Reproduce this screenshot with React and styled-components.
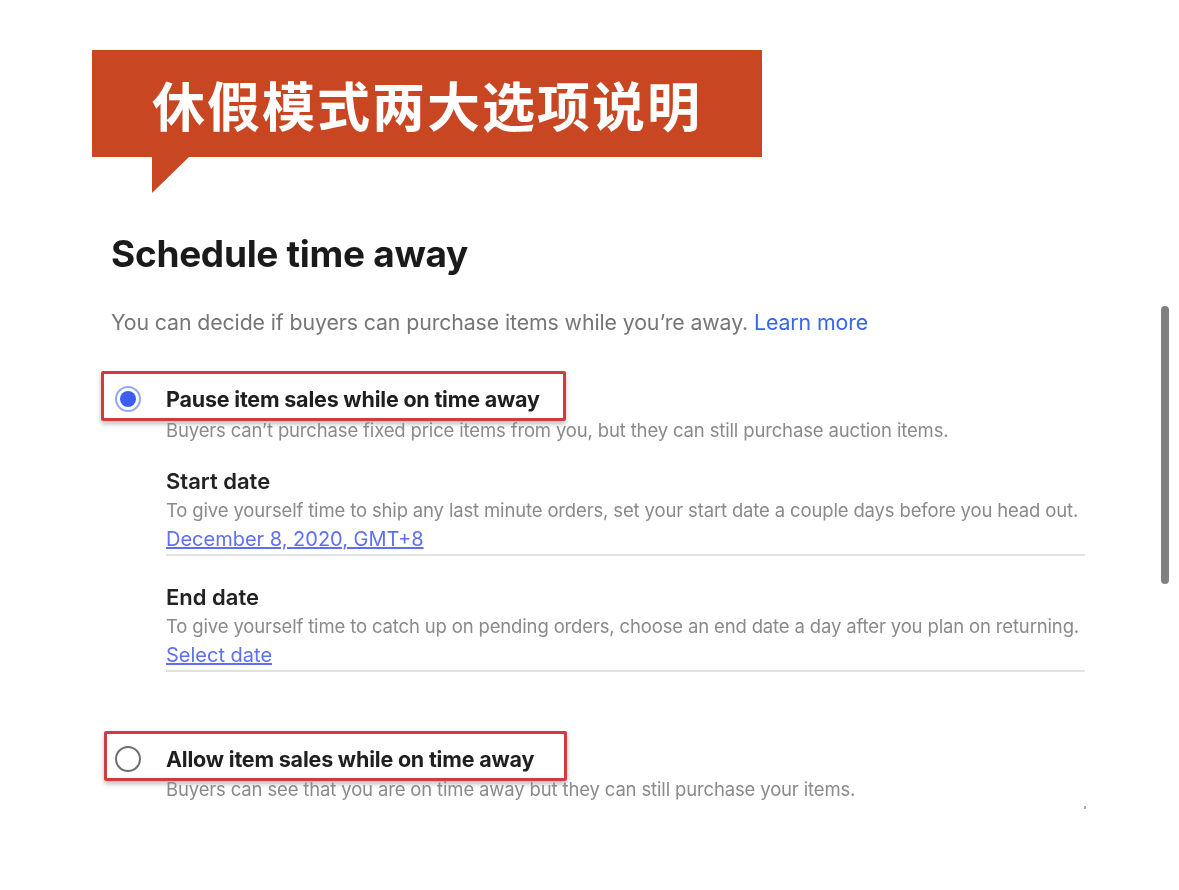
import React from 'react';
import styled, { createGlobalStyle } from 'styled-components';

const GlobalStyle = createGlobalStyle`
  html, body {
    margin: 0;
    padding: 0;
    background: #fff;
  }
  body {
    font-family: Inter, "Noto Sans", "Liberation Sans", sans-serif;
    overflow: hidden;
  }
`;

const Page = styled.div`
  position: relative;
  width: 1179px;
  height: 890px;
  padding-top: 50px;
  box-sizing: border-box;
`;

const Banner = styled.div`
  position: relative;
  margin-left: 92px;
  width: 670px;
  height: 107px;
  background: #c84622;
  display: flex;
  align-items: center;
  padding-left: 60px;
  box-sizing: border-box;
  color: #fff;
  font-family: "Noto Sans CJK SC", sans-serif;
  font-weight: 700;
  font-size: 53px;
  letter-spacing: 2px;

  &::after {
    content: '';
    position: absolute;
    left: 60px;
    top: 107px;
    border-top: 36px solid #c84622;
    border-right: 37px solid transparent;
  }
`;

const Content = styled.div`
  padding-left: 111px;
  padding-top: 75px;
  filter: blur(0.35px);
`;

const Title = styled.h1`
  margin: 0;
  font-size: 37px;
  font-weight: 700;
  color: #1a1a1a;
  letter-spacing: -0.3px;
  line-height: 44px;
`;

const Intro = styled.p`
  margin: 33px 0 0;
  font-size: 21.3px;
  color: #767676;
  line-height: 26px;
  letter-spacing: -0.1px;
`;

const Link = styled.a`
  color: ${p => (p.$plain ? '#3665f3' : '#5f6ff0')};
  text-decoration: ${p => (p.$plain ? 'none' : 'underline')};
`;

const Highlight = styled.div`
  display: flex;
  align-items: center;
  width: ${p => p.$w}px;
  height: 50px;
  margin-left: ${p => p.$shift}px;
  margin-top: ${p => p.$top}px;
  border: 3px solid #d23a3e;
  border-radius: 2px;
  box-sizing: border-box;
  box-shadow: 0 3px 5px rgba(0, 0, 0, 0.25);
  padding-left: ${p => 1 - p.$shift}px;
  padding-top: 6px;
`;

const Radio = styled.span`
  width: 26px;
  height: 26px;
  border-radius: 50%;
  box-sizing: border-box;
  border: 2px solid ${p => (p.$on ? '#93a8f8' : '#6e6e6e')};
  display: flex;
  align-items: center;
  justify-content: center;
  flex-shrink: 0;

  &::after {
    content: '';
    width: 16px;
    height: 16px;
    border-radius: 50%;
    background: ${p => (p.$on ? '#3b5ef0' : 'transparent')};
  }
`;

const OptionLabel = styled.span`
  margin-left: 25px;
  font-size: 21.5px;
  font-weight: 700;
  color: #1f1f1f;
  letter-spacing: -0.2px;
`;

const Indented = styled.div`
  padding-left: 55px;
  width: 919px;
  margin-top: ${p => p.$top}px;
`;

const Hint = styled.div`
  font-size: 18.5px;
  color: #8a8a8a;
  line-height: 22px;
  letter-spacing: -0.15px;
  white-space: nowrap;
  margin-top: ${p => p.$top || 0}px;
`;

const Field = styled.div`
  border-bottom: 2px solid #e2e2e2;
  padding-bottom: 1px;
  margin-top: ${p => p.$top}px;
`;

const FieldTitle = styled.div`
  font-size: 22px;
  font-weight: 600;
  color: #222;
  line-height: 26px;
`;

const FieldLink = styled.div`
  margin-top: 4px;
  font-size: 20px;
  line-height: 28px;
`;

const Scrollbar = styled.div`
  position: absolute;
  left: 1161px;
  top: 306px;
  width: 8px;
  height: 278px;
  border-radius: 4px;
  background: #808080;
`;

const Dot = styled.div`
  position: absolute;
  left: 1084px;
  top: 806px;
  width: 2px;
  height: 3px;
  background: #aaa;
`;

export default function App() {
  return (
    <Page>
      <GlobalStyle />
      <Banner>休假模式两大选项说明</Banner>
      <Content>
        <Title>Schedule time away</Title>
        <Intro>
          You can decide if buyers can purchase items while you’re away.{' '}
          <Link $plain>Learn more</Link>
        </Intro>

        <Highlight $w={465} $shift={-10} $top={36}>
          <Radio $on />
          <OptionLabel>Pause item sales while on time away</OptionLabel>
        </Highlight>
        <Indented $top={-2}>
          <Hint>Buyers can’t purchase fixed price items from you, but they can still purchase auction items.</Hint>
          <Field $top={27}>
            <FieldTitle>Start date</FieldTitle>
            <Hint $top={5}>To give yourself time to ship any last minute orders, set your start date a couple days before you head out.</Hint>
            <FieldLink><Link>December 8, 2020, GMT+8</Link></FieldLink>
          </Field>
          <Field $top={28}>
            <FieldTitle>End date</FieldTitle>
            <Hint $top={5}>To give yourself time to catch up on pending orders, choose an end date a day after you plan on returning.</Hint>
            <FieldLink><Link>Select date</Link></FieldLink>
          </Field>
        </Indented>

        <Highlight $w={463} $shift={-7} $top={59}>
          <Radio />
          <OptionLabel>Allow item sales while on time away</OptionLabel>
        </Highlight>
        <Indented $top={-3}>
          <Hint>Buyers can see that you are on time away but they can still purchase your items.</Hint>
        </Indented>
      </Content>
      <Scrollbar />
      <Dot />
    </Page>
  );
}
